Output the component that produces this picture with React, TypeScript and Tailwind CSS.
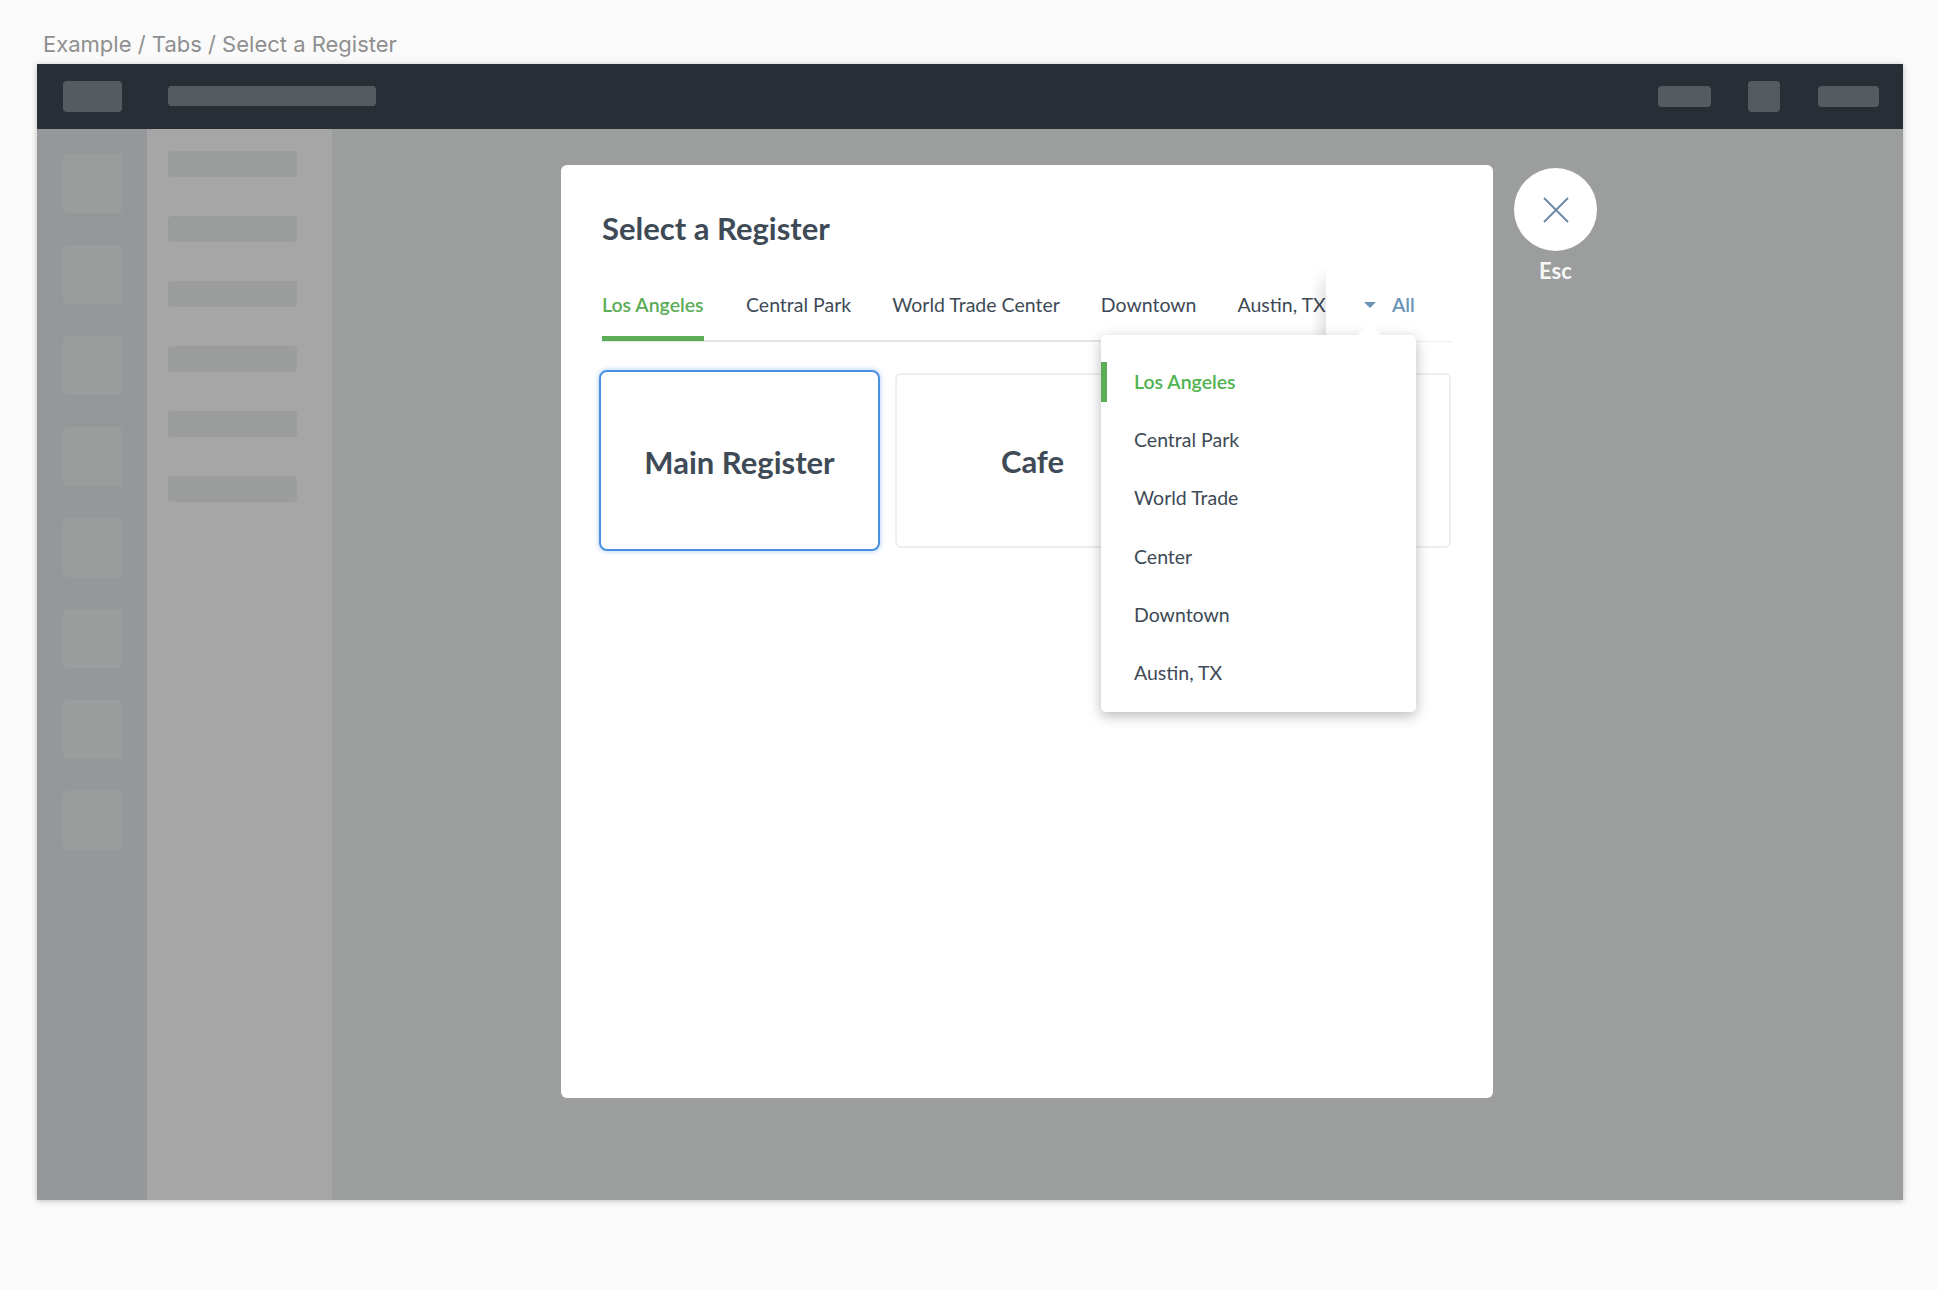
const tabs = ['World Trade Center', 'Downtown', 'Austin, TX'];
const menu = ['Central Park', 'World Trade Center', 'Downtown', 'Austin, TX'];
const rail = [0, 1, 2, 3, 4, 5, 6, 7];
const subnav = [0, 1, 2, 3, 4, 5];

function Skeleton() {
  return (
    <>
      <div className="flex h-[65px] shrink-0 items-center bg-[#282e35] pr-[24px] pb-[1px] pl-[26px]">
        <div className="h-[31px] w-[59px] rounded-[4px] bg-[#565b5f]" />
        <div className="ml-[46px] h-[20px] w-[208px] rounded-[4px] bg-[#565b5f]" />
        <div className="ml-auto h-[21px] w-[53px] rounded-[4px] bg-[#565b5f]" />
        <div className="ml-[37px] h-[31px] w-[32px] rounded-[4px] bg-[#565b5f]" />
        <div className="ml-[38px] h-[21px] w-[61px] rounded-[4px] bg-[#565b5f]" />
      </div>
      <div className="flex flex-1 bg-[#9c9e9d]">
        <div className="flex w-[110px] flex-col gap-[32px] bg-[#96979a] pt-[25px] pl-[26px]">
          {rail.map((i) => (
            <div key={i} className="h-[59px] w-[59px] rounded-[4px] bg-[#9b9c9c]" />
          ))}
        </div>
        <div className="flex w-[185px] flex-col gap-[39px] bg-[#a6a6a6] pt-[22px] pl-[21px]">
          {subnav.map((i) => (
            <div key={i} className="h-[26px] w-[129px] rounded-[4px] bg-[#9b9c9c]" />
          ))}
        </div>
      </div>
    </>
  );
}

function TabBar() {
  return (
    <div className="relative mt-[19px] flex h-[72px] items-start border-b-2 border-[#e3e6e9] text-[19.5px] text-[#3e4a56]">
      <div className="h-[71px] w-[102px] border-b-[5px] border-[#5cad57] pt-[23px] leading-[24px] font-semibold whitespace-nowrap text-[#5cad57]">
        Los Angeles
      </div>
      <div className="ml-[42px] pt-[23px] leading-[24px] whitespace-nowrap">Central Park</div>
      {tabs.map((t) => (
        <div key={t} className="ml-[41px] pt-[23px] leading-[24px] whitespace-nowrap">
          {t}
        </div>
      ))}
      <div className="absolute top-[-2px] right-0 bottom-[-2px] left-[724px] border-b border-[#eeeff1] bg-white" />
      <div className="absolute top-[-4px] bottom-0 left-[709px] w-[15px] bg-gradient-to-l from-black/10 to-transparent [mask-image:linear-gradient(to_bottom,transparent,black_28px)]" />
      <div className="absolute top-[23px] left-[762px] flex items-center leading-[24px] font-semibold text-[#6a93b5]">
        <svg width="12" height="6" viewBox="0 0 12 6" className="fill-[#6a93b5]">
          <polygon points="0,0 12,0 6,6" />
        </svg>
        <span className="ml-[16px]">All</span>
      </div>
    </div>
  );
}

function LocationMenu() {
  return (
    <div className="absolute top-[170px] left-[540px] w-[315px] rounded-[5px] bg-white pt-[18px] pb-[10px] text-[19.5px] leading-[58.2px] text-[#3e4a56] shadow-[0_4px_14px_rgba(0,0,0,0.28)]">
      <div className="absolute top-[-8px] left-[260px] h-[17px] w-[17px] rotate-45 bg-white" />
      <div className="relative pl-[33px] font-semibold text-[#4fb34f]">
        <div className="absolute top-[9px] left-0 h-[40px] w-[6px] bg-[#5cad57]" />
        Los Angeles
      </div>
      {menu.map((m) => (
        <div key={m} className="relative max-w-[170px] pl-[33px]">
          {m}
        </div>
      ))}
    </div>
  );
}

function Modal() {
  return (
    <div className="absolute top-[101px] left-[524px] h-[933px] w-[932px] rounded-[6px] bg-white pt-[41px] pr-[41px] pl-[41px]">
      <h1 className="text-[31px] leading-[45px] font-bold text-[#3e4a56]">Select a Register</h1>
      <TabBar />
      <div className="mt-[31px] grid h-[175px] grid-cols-[275px_275px_1fr] gap-[18px] text-[31px] font-bold text-[#3e4a56]">
        <div className="-m-[3px] flex items-center justify-center rounded-[8px] border-2 border-[#4a90e2] pt-[3px] shadow-[0_0_4px_1px_rgba(74,144,226,0.35)]">
          Main Register
        </div>
        <div className="flex items-center justify-center rounded-[6px] border-2 border-[#eceef0] pt-[1px]">Cafe</div>
        <div className="mr-[1px] rounded-[6px] border-2 border-[#eceef0]" />
      </div>
      <LocationMenu />
    </div>
  );
}

function CloseButton() {
  return (
    <div className="absolute top-[104px] left-[1477px] flex w-[83px] flex-col items-center">
      <div className="flex h-[83px] w-[83px] items-center justify-center rounded-full bg-white">
        <svg width="26" height="26" viewBox="0 0 26 26" className="stroke-[#6f8ca6]" strokeWidth="2" fill="none">
          <path d="M1 1 L25 25 M25 1 L1 25" />
        </svg>
      </div>
      <div className="mt-[6px] text-[22px] leading-[28px] font-bold text-[#f7f7f7]">Esc</div>
    </div>
  );
}

export default function App() {
  return (
    <div className="h-[1290px] w-full overflow-hidden bg-[#fafafa] pl-[37px] font-['Lato','Noto_Sans',sans-serif]">
      <div className="h-[64px] pt-[29px] pl-[6px] font-['Inter',sans-serif] text-[22px] leading-[30px] text-[#8f8f8f]">
        Example / Tabs / Select a Register
      </div>
      <div className="relative flex h-[1136px] w-[1866px] flex-col shadow-[0_1px_6px_rgba(0,0,0,0.25)]">
        <Skeleton />
        <Modal />
        <CloseButton />
      </div>
    </div>
  );
}
